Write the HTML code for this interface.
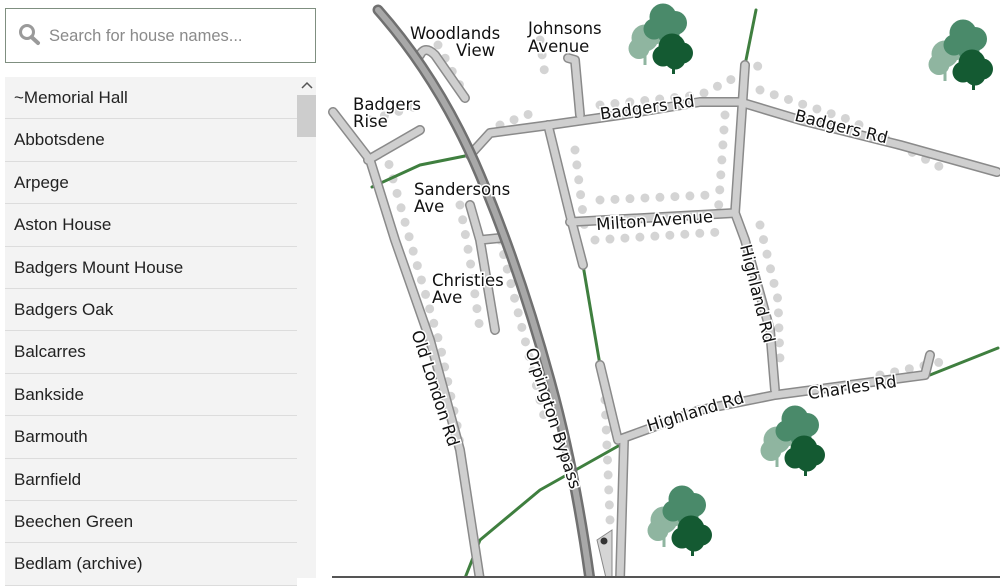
<!DOCTYPE html>
<html><head><meta charset="utf-8"><style>
body{margin:0;width:1000px;height:578px;overflow:hidden;background:#fff;font-family:"Liberation Sans",sans-serif;position:relative}
.search{position:absolute;left:5px;top:8px;width:311px;height:55px;border:1px solid #7f8f80;box-sizing:border-box;background:#fff}
.search span{position:absolute;left:43px;top:18px;font-size:16.5px;color:#8a8a8a}
.list{position:absolute;left:5px;top:77px;width:292px}
.item{height:41.4px;border-bottom:1px solid #dcdcdc;background:#f3f3f3;font-size:17px;color:#222;line-height:42px;padding-left:9px;box-sizing:content-box}
.sb{position:absolute;left:297px;top:77px;width:19px;height:501px;background:#f3f3f3}
.thumb{position:absolute;left:297px;top:95px;width:19px;height:42px;background:#cdcdcd}
svg{position:absolute;left:0;top:0}
.lb{font-family:"DejaVu Sans",sans-serif;font-size:16.5px;fill:#111;paint-order:stroke;stroke:#fff;stroke-width:3px}
</style></head><body>
<div class="search"><svg width="30" height="30" style="left:10px;top:13px"><circle cx="11" cy="10" r="6.5" fill="none" stroke="#9a9a9a" stroke-width="3"/><line x1="15.5" y1="15" x2="22" y2="21" stroke="#9a9a9a" stroke-width="4" stroke-linecap="round"/></svg><span>Search for house names...</span></div>
<div class="list">
<div class="item">~Memorial Hall</div><div class="item">Abbotsdene</div><div class="item">Arpege</div><div class="item">Aston House</div><div class="item">Badgers Mount House</div><div class="item">Badgers Oak</div><div class="item">Balcarres</div><div class="item">Bankside</div><div class="item">Barmouth</div><div class="item">Barnfield</div><div class="item">Beechen Green</div><div class="item">Bedlam (archive)</div>
</div>
<div class="sb"></div><div class="thumb"></div>
<svg width="20" height="12" style="left:297px;top:79px"><path d="M5 9 L10 4 L15 9" fill="none" stroke="#555" stroke-width="1.5"/></svg>
<svg width="1000" height="578" viewBox="0 0 1000 578">
<defs>
<g id="tree">
<g fill="#8fb5a0"><circle cx="-12" cy="8" r="9"/><circle cx="-4" cy="4" r="8"/><circle cx="-16" cy="15" r="7"/><rect x="-13" y="14" width="2" height="12"/></g>
<g fill="#4a8a6a"><circle cx="0" cy="-6" r="9"/><circle cx="8" cy="-2" r="8"/><circle cx="-6" cy="2" r="7"/><circle cx="4" cy="6" r="7"/><rect x="0" y="4" width="2" height="12"/></g>
<g fill="#145a32"><circle cx="6" cy="14" r="9"/><circle cx="13" cy="18" r="7"/><circle cx="0" cy="20" r="7"/><circle cx="8" cy="22" r="7"/><rect x="6" y="24" width="2" height="8"/></g>
</g>
</defs>
<g fill="none" stroke="#d4d4d4" stroke-width="9" stroke-linecap="round" stroke-dasharray="0 15">
<path d="M385 150 L410 240 L440 345 L458 430 L470 520"/>
<path d="M438 45 L465 95"/>
<path d="M460 205 L470 260 L480 330"/>
<path d="M500 240 L525 340 L545 420"/>
<path d="M500 125 L540 110"/>
<path d="M600 105 L700 95 L770 60"/>
<path d="M760 90 L850 120 L950 172"/>
<path d="M725 115 L718 215"/>
<path d="M575 150 L585 230"/>
<path d="M600 200 L710 195"/>
<path d="M595 240 L720 232"/>
<path d="M760 225 L778 300 L780 360"/>
<path d="M605 400 L610 520"/>
<path d="M540 40 L545 75"/>
<path d="M370 120 L420 105"/>
<path d="M880 375 L950 360"/>
</g>
<g fill="none" stroke-linecap="round" stroke-linejoin="round">
<g stroke="#3f7f3f" stroke-width="3">
<path d="M372 187 L420 165 L470 155"/>
<path d="M583 265 L600 365"/>
<path d="M756 10 L745 65"/>
<path d="M930 375 L998 348"/>
<path d="M620 445 L540 490 L480 540 L465 578"/>
</g>
<g stroke="#8a8a8a" stroke-width="10">
<path d="M333 112 L370 160 L395 240 L430 340 L460 450 L480 580"/>
<path d="M368 160 L420 130"/>
<path d="M420 55 Q425 45 435 55 L465 98"/>
<path d="M470 155 L490 133 L550 125 L620 115 L700 102 L740 102 L800 120 L900 145 L997 172"/>
<path d="M568 58 L575 60 L580 115"/>
<path d="M548 125 L570 215 L583 265"/>
<path d="M570 222 L735 213"/>
<path d="M745 65 L735 213 L745 240 L770 330 L775 390"/>
<path d="M600 365 L618 440 L700 410 L775 395 L850 385 L925 375 L930 355"/>
<path d="M624 440 L620 580"/>
<path d="M470 205 L480 240 L495 330 M480 240 L500 238"/>
</g>
<g stroke="#cfcfcf" stroke-width="7">
<path d="M333 112 L370 160 L395 240 L430 340 L460 450 L480 580"/>
<path d="M368 160 L420 130"/>
<path d="M420 55 Q425 45 435 55 L465 98"/>
<path d="M470 155 L490 133 L550 125 L620 115 L700 102 L740 102 L800 120 L900 145 L997 172"/>
<path d="M568 58 L575 60 L580 115"/>
<path d="M548 125 L570 215 L583 265"/>
<path d="M570 222 L735 213"/>
<path d="M745 65 L735 213 L745 240 L770 330 L775 390"/>
<path d="M600 365 L618 440 L700 410 L775 395 L850 385 L925 375 L930 355"/>
<path d="M624 440 L620 580"/>
<path d="M470 205 L480 240 L495 330 M480 240 L500 238"/>
</g>
<path d="M378 10 Q440 80 480 175 Q520 270 550 380 Q575 470 590 580" stroke="#707070" stroke-width="11"/>
<path d="M378 10 Q440 80 480 175 Q520 270 550 380 Q575 470 590 580" stroke="#a8a8a8" stroke-width="6"/>
</g>
<path d="M597 540 L612 530 L612 578 L606 578 Z" fill="#d5d5d5" stroke="#888" stroke-width="1"/>
<circle cx="604" cy="541" r="3.5" fill="#333"/>
<use href="#tree" transform="translate(663,26) scale(1.5)"/>
<use href="#tree" transform="translate(963,42) scale(1.5)"/>
<use href="#tree" transform="translate(795,428) scale(1.5)"/>
<use href="#tree" transform="translate(682,508) scale(1.5)"/>
<g class="lb">
<text x="410" y="39">Woodlands</text><text x="456" y="56">View</text>
<text x="528" y="34">Johnsons</text><text x="528" y="52">Avenue</text>
<text x="353" y="110">Badgers</text><text x="353" y="127">Rise</text>
<text x="414" y="195">Sandersons</text><text x="414" y="212">Ave</text>
<text x="432" y="286">Christies</text><text x="432" y="303">Ave</text>
<text transform="translate(648,113) rotate(-8)" text-anchor="middle">Badgers Rd</text>
<text transform="translate(840,132) rotate(14)" text-anchor="middle">Badgers Rd</text>
<text transform="translate(655,226) rotate(-4)" text-anchor="middle">Milton Avenue</text>
<text transform="translate(752,295) rotate(76)" text-anchor="middle">Highland Rd</text>
<text transform="translate(697,417) rotate(-17)" text-anchor="middle">Highland Rd</text>
<text transform="translate(853,393) rotate(-8)" text-anchor="middle">Charles Rd</text>
<text transform="translate(430,390) rotate(72)" text-anchor="middle">Old London Rd</text>
<text transform="translate(548,420) rotate(72)" text-anchor="middle">Orpington Bypass</text>
</g>
<rect x="332" y="576" width="668" height="2" fill="#555"/>
</svg>
</body></html>
